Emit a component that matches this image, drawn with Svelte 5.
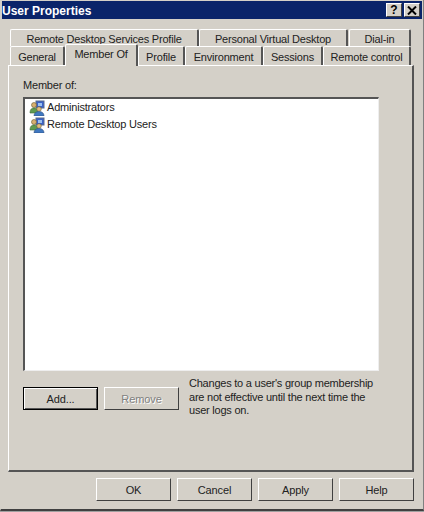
<script lang="ts">
  const topTabs = [
    { label: 'Remote Desktop Services Profile', width: 189 },
    { label: 'Personal Virtual Desktop', width: 149 },
    { label: 'Dial-in', width: 62 }
  ];
  const tabs = [
    { label: 'General', width: 55 },
    { label: 'Member Of', width: 73, active: true },
    { label: 'Profile', width: 47 },
    { label: 'Environment', width: 78 },
    { label: 'Sessions', width: 60 },
    { label: 'Remote control', width: 88 }
  ];
  const members = ['Administrators', 'Remote Desktop Users'];
  const actions = ['OK', 'Cancel', 'Apply', 'Help'];
</script>

<div class="window">
  <div class="titlebar">
    <span class="title">User Properties</span>
    <div class="caption-btns">
      <button class="cap">?</button>
      <button class="cap x" aria-label="Close">
        <svg width="10" height="9" viewBox="0 0 10 9"><path d="M1 0.5 L9 8.5 M9 0.5 L1 8.5" stroke="#000" stroke-width="2" fill="none" /></svg>
      </button>
    </div>
  </div>

  <div class="body">
    <div class="tabrow top">
      {#each topTabs as t}
        <div class="tab" style="width:{t.width}px">{t.label}</div>
      {/each}
    </div>
    <div class="tabrow second">
      {#each tabs as t}
        <div class="tab" class:active={t.active} style="width:{t.width}px">{t.label}</div>
      {/each}
    </div>

    <div class="panel">
      <div class="label">Member of:</div>
      <div class="list">
        {#each members as m}
          <div class="row">
            <svg class="icon" width="16" height="16" viewBox="0 0 16 16">
              <rect x="7" y="1" width="8" height="7" fill="#3a62c8" stroke="#5a6a8a" stroke-width="1" />
              <rect x="9" y="3" width="4" height="3" fill="#9cc0f0" />
              <circle cx="5" cy="5" r="2.5" fill="#d8b070" stroke="#6a5a30" stroke-width="0.6" />
              <path d="M1 13 C1 9 3 8 5 8 C7 8 9 9 9 13 Z" fill="#5f9a4f" stroke="#3f6a3a" stroke-width="0.6" />
              <circle cx="10" cy="9" r="2.3" fill="#e0bc80" stroke="#6a5a30" stroke-width="0.6" />
              <path d="M5 16 C5 13 7 11.5 10 11.5 C13 11.5 15 13 15 16 Z" fill="#3f78c0" stroke="#2f4f80" stroke-width="0.6" />
            </svg>
            <span>{m}</span>
          </div>
        {/each}
      </div>
      <div class="controls">
        <button class="btn default">Add...</button>
        <button class="btn disabled" disabled>Remove</button>
        <p class="note">Changes to a user's group membership are not effective until the next time the user logs on.</p>
      </div>
    </div>

    <div class="footer">
      {#each actions as a}
        <button class="btn">{a}</button>
      {/each}
    </div>
  </div>
</div>

<style>
  :global(body) { margin: 0; background: #a0a0a0; }
  .window {
    width: 424px;
    height: 511px;
    box-sizing: border-box;
    background: #d4d0c8;
    border-left: 1px solid #d4d0c8;
    border-right: 1px solid #808080;
    border-bottom: 2px solid #404040;
    padding: 1px 1px 0 1px;
    display: flex;
    flex-direction: column;
    font-family: "Liberation Sans", Arial, sans-serif;
    font-size: 11px;
    letter-spacing: -0.2px;
    color: #222;
  }
  .titlebar {
    height: 18px;
    background: #0a246a;
    display: flex;
    align-items: center;
    justify-content: space-between;
    padding: 0 2px 0 0;
    flex: none;
  }
  .title { color: #fff; font-weight: bold; font-size: 12px; letter-spacing: 0; position: relative; top: 1px; }
  .caption-btns { display: flex; gap: 2px; }
  .cap {
    width: 16px;
    height: 14px;
    padding: 0;
    background: #d4d0c8;
    border: 1px solid;
    border-color: #fff #404040 #404040 #fff;
    font: bold 12px "Liberation Sans", Arial, sans-serif;
    line-height: 12px;
    color: #000;
    display: flex;
    align-items: center;
    justify-content: center;
  }
  .body { flex: 1; padding: 10px 8px 0 6px; display: flex; flex-direction: column; min-height: 0; }
  .tabrow { display: flex; flex: none; }
  .top { padding-left: 2px; height: 17px; }
  .second { padding-left: 2px; height: 19px; position: relative; z-index: 1; }
  .tab {
    box-sizing: border-box;
    text-align: center;
    background: #d4d0c8;
    border-top: 1px solid #fff;
    border-left: 1px solid #fff;
    border-right: 2px solid #555;
    border-top-left-radius: 2px;
    border-top-right-radius: 2px;
    line-height: 19px;
    white-space: nowrap;
  }
  .top .tab { height: 17px; }
  .second .tab { height: 19px; line-height: 20px; }
  .top .tab:last-child { margin-left: 1px; }
  .second .tab.active {
    height: 22px;
    margin-top: -2px;
    line-height: 19px;
    position: relative;
  }
  .panel {
    width: 406px;
    height: 407px;
    box-sizing: border-box;
    flex: none;
    border-style: solid;
    border-color: #fff #555 #555 #fff;
    border-width: 1px 2px 2px 1px;
    padding: 13px 0 0 14px;
  }
  .label { line-height: 13px; }
  .list {
    width: 356px;
    height: 274px;
    box-sizing: border-box;
    margin-top: 5px;
    background: #fff;
    border-style: solid;
    border-width: 2px 1px 1px 2px;
    border-color: #555 #eee #eee #555;
    padding: 0 0 0 4px;
  }
  .row { display: flex; align-items: center; height: 17px; gap: 2px; }
  .row span { position: relative; top: -1px; }
  .icon { flex: none; }
  .controls { display: flex; align-items: flex-start; gap: 6px; margin-top: 16px; }
  .btn {
    width: 75px;
    height: 23px;
    padding: 0;
    background: #d4d0c8;
    border: 1px solid;
    border-color: #fff #404040 #404040 #fff;
    font: 11px "Liberation Sans", Arial, sans-serif;
    letter-spacing: -0.1px;
    color: #222;
  }
  .btn.default { border-color: #000; box-shadow: inset 1px 1px 0 #fff, inset -1px -1px 0 #555; }
  .btn.disabled { color: #808080; text-shadow: 1px 1px 0 #fff; }
  .note { margin: -10px 0 0 4px; width: 190px; line-height: 13.5px; letter-spacing: -0.23px; }
  .footer { display: flex; gap: 6px; justify-content: flex-end; margin: 6px 0 0 0; }
</style>
